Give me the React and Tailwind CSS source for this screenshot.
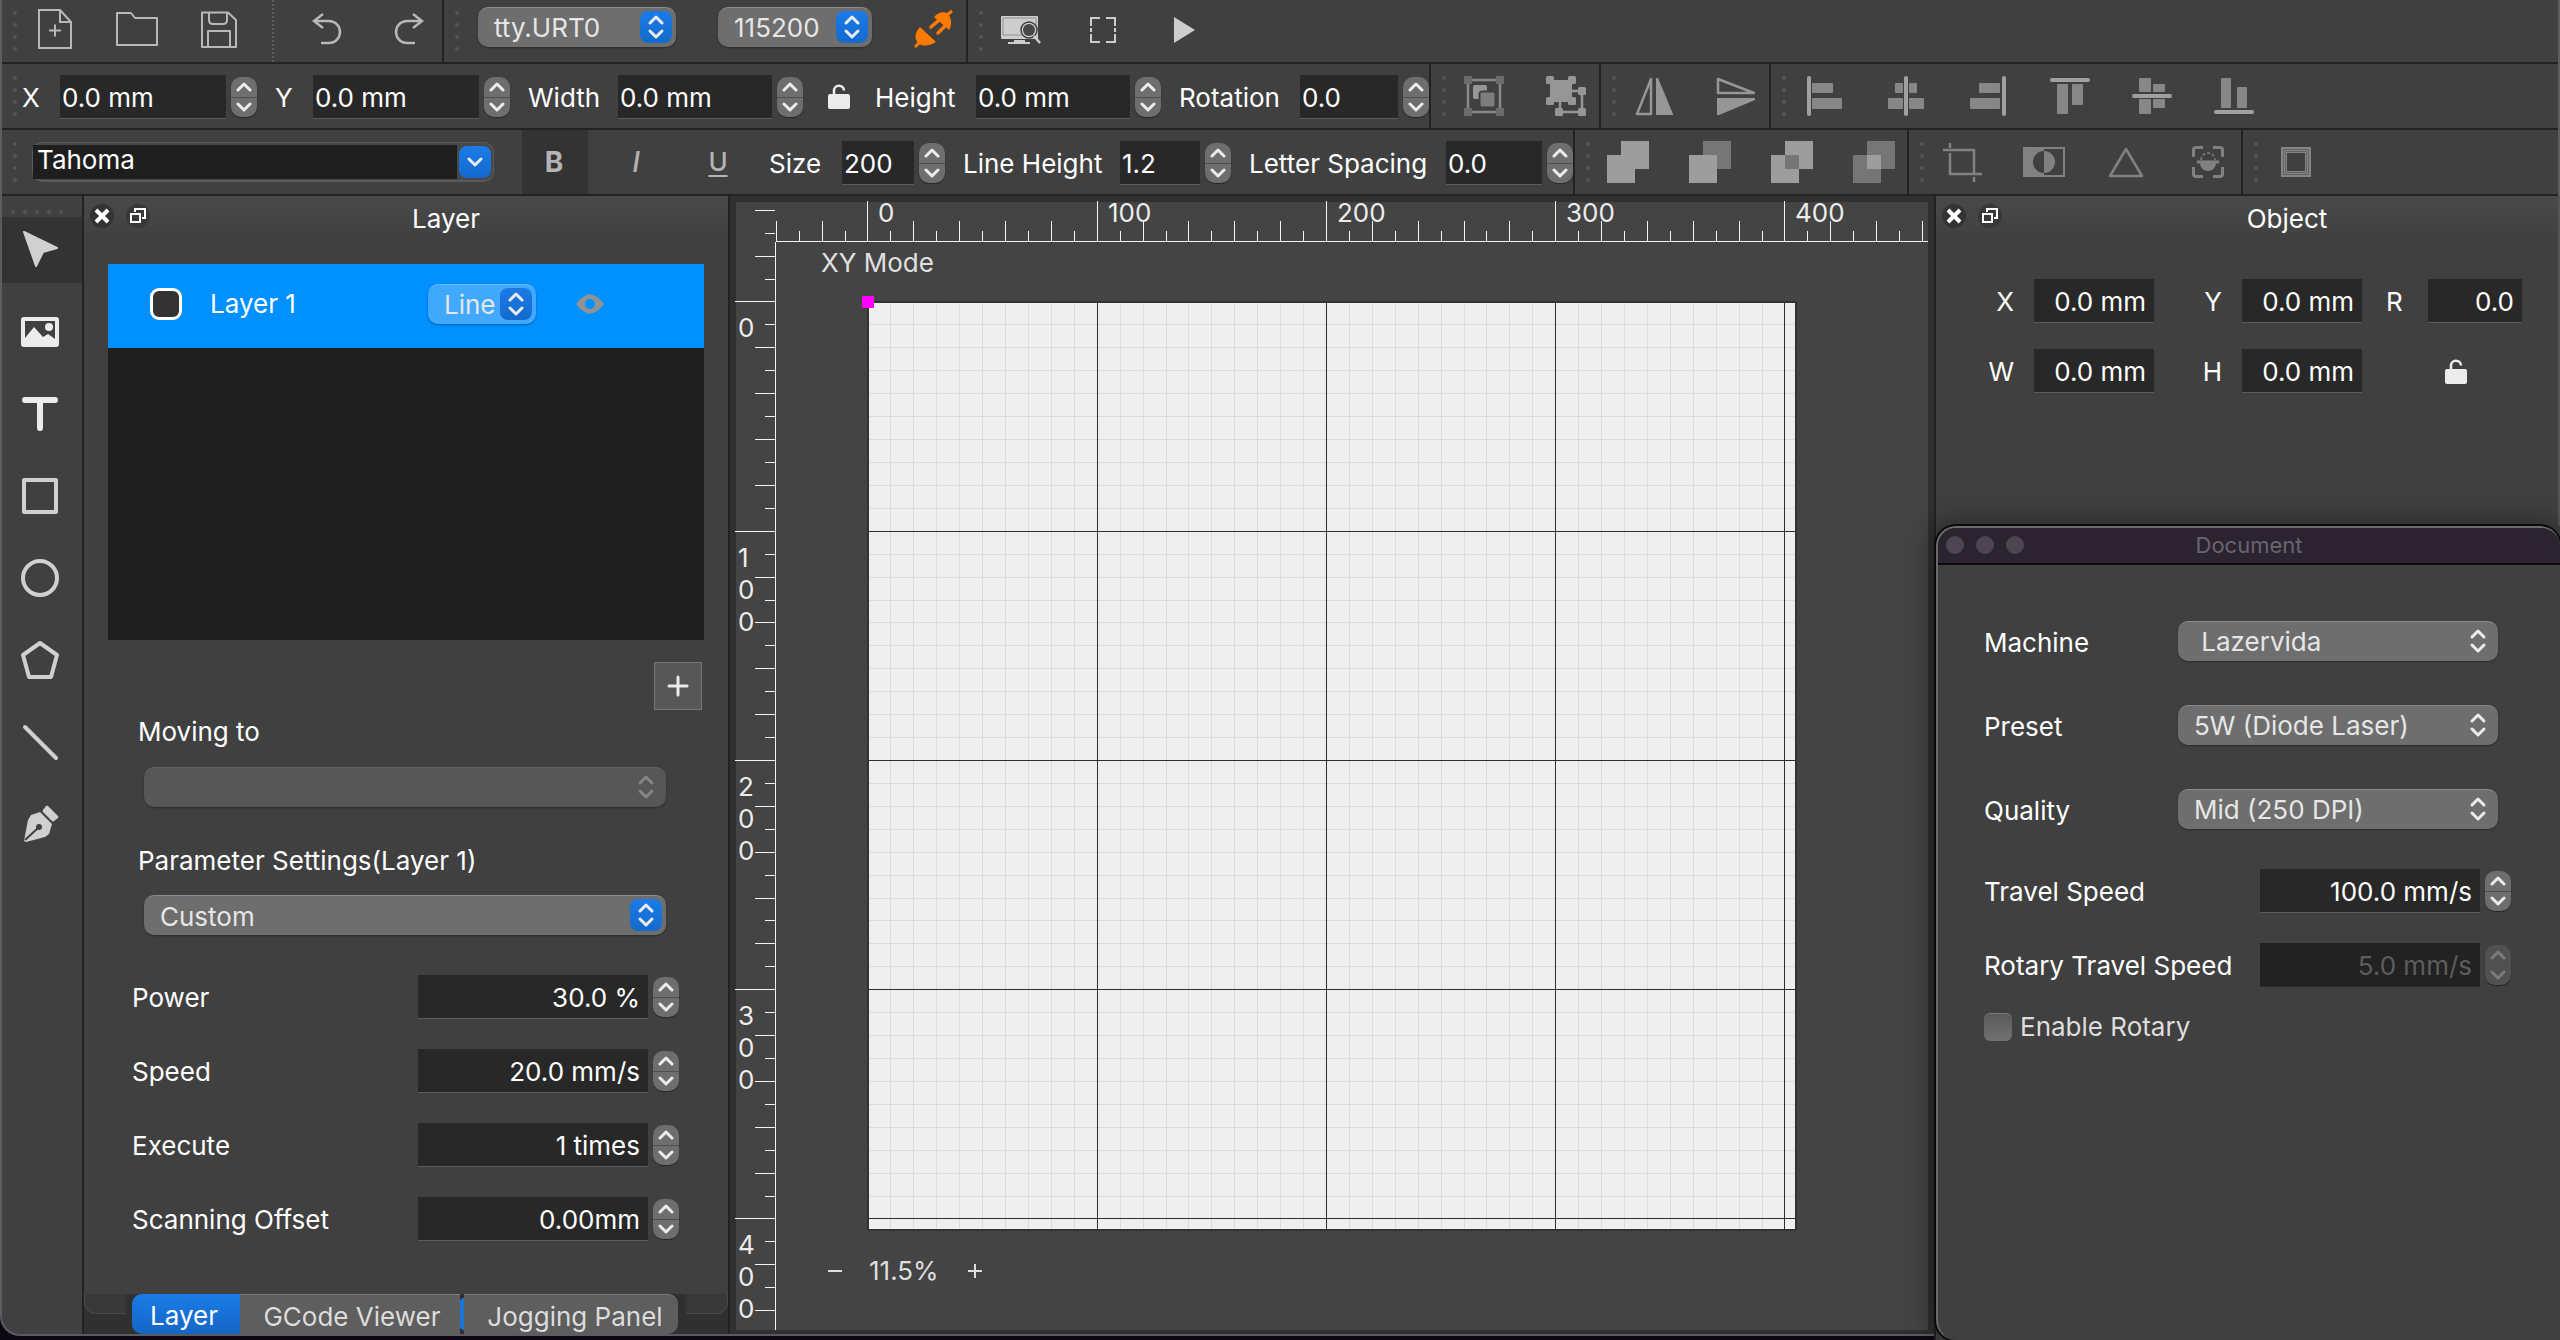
import { useId } from "react";
import clsx from "clsx";

const FONT = "font-['Inter','Liberation_Sans',sans-serif]";

/* ---------- icons ---------- */

function Icon({ children, className }) {
  return (
    <svg
      viewBox="0 0 48 48"
      aria-hidden="true"
      className={clsx("size-12 shrink-0", className)}
      fill="none"
      stroke="currentColor"
      strokeWidth="2"
    >
      {children}
    </svg>
  );
}

const fileIcons = {
  "New file": (
    <>
      <path d="M8 4H29L40 16V42H8Z M29 4V16H40" />
      <path d="M18 24.500H30M24 18.500V30.500" />
    </>
  ),
  "Open file": <path d="M4 39V7H18L22 12H44V39Z" strokeLinejoin="round" />,
  "Save file": (
    <path d="M7 6.500H33L41 14V41H7Z M14 7V14Q14 18 18 18H28Q32 18 32 14V7 M13 41V25H35V41" strokeLinejoin="round" />
  ),
};

const historyIcons = {
  Undo: <path d="M20 8L11 15L20 22M11 15H26A11 11 0 0 1 26 37H18" strokeWidth="2.500" />,
  Redo: <path d="M28 8L37 15L28 22M37 15H22A11 11 0 0 0 22 37H30" strokeWidth="2.500" />,
};

const previewIcons = {
  Preview: (
    <>
      <rect x="4" y="9" width="37" height="23" rx="1" fill="#cdcdcd" stroke="none" />
      <path d="M6 11H39V28H6Z" stroke="#8f8f8f" strokeWidth="1" />
      <path d="M17 33H28V35H33V37H11V35H17Z" fill="#cdcdcd" stroke="none" />
      <circle cx="32" cy="23" r="8" fill="#cdcdcd" stroke="#404040" strokeWidth="1.500" />
      <circle cx="32" cy="23" r="6" fill="#474747" stroke="none" />
      <path d="M37 29L43 36" stroke="#cdcdcd" strokeWidth="2.500" />
    </>
  ),
  Frame: <path d="M21 11H12V19M27 11H36V19M21 35H12V27M27 35H36V27M12 21V25M36 21V25" />,
  Start: <path d="M13 10L34 23L13 36Z" fill="currentColor" stroke="none" />,
};

const groupIcons = {
  Group: (
    <>
      <rect x="8" y="8" width="32" height="32" stroke="#8a8a8a" strokeWidth="2.500" />
      <path
        d="M4 5Q4 4 5 4H12V12H4ZM36 4H43Q44 4 44 5V12H36ZM4 36H12V44H5Q4 44 4 43ZM36 36H44V43Q44 44 43 44H36Z"
        fill="#6c6c6c"
        stroke="none"
      />
      <rect x="13" y="13" width="14" height="14" rx="2" fill="#969696" stroke="none" />
      <rect x="19.500" y="19.500" width="16" height="16" rx="2.500" fill="#7d7d7d" stroke="#404040" />
    </>
  ),
  Ungroup: (
    <>
      <path d="M30 19H40V40H18V30" strokeWidth="2.500" />
      <g fill="currentColor" stroke="none">
        <rect x="8" y="8" width="22" height="22" />
        <rect x="4" y="4" width="8" height="8" rx="1.500" />
        <rect x="26" y="4" width="8" height="8" rx="1.500" />
        <rect x="4" y="25" width="8" height="8" rx="1.500" />
        <rect x="26" y="25" width="8" height="8" rx="1.500" />
        <rect x="36" y="15" width="8" height="8" rx="1.500" />
        <rect x="13" y="36" width="8" height="8" rx="1.500" />
        <rect x="36" y="36" width="8" height="8" rx="1.500" />
      </g>
    </>
  ),
};

const mirrorIcons = {
  "Flip horizontally": (
    <>
      <path d="M21 7V42H7Z" strokeWidth="2.500" strokeLinejoin="round" />
      <path d="M26 6H28L43 42V43H26Z" fill="currentColor" stroke="none" />
    </>
  ),
  "Flip vertically": (
    <>
      <path d="M6 7V21H42Z" strokeWidth="2.500" strokeLinejoin="round" />
      <path d="M5 26H43V28L7 43H5Z" fill="currentColor" stroke="none" />
    </>
  ),
};

// [bar, blocks] of each align icon as x, y, w, h
const alignShapes = {
  "Align left": [[7, 4, 4, 40], [12, 11, 21, 10], [12, 26, 30, 11]],
  "Align center": [[22, 4, 4, 40], [13, 11, 8, 10], [27, 11, 8, 10], [6, 26, 15, 11], [27, 26, 15, 11]],
  "Align right": [[38, 4, 4, 40], [15, 11, 21, 10], [6, 26, 30, 11]],
  "Align top": [[4, 6, 40, 4], [11, 12, 11, 30], [26, 12, 11, 21]],
  "Align middle": [[4, 22, 40, 4], [11, 6, 12, 14], [11, 27, 12, 15], [25, 12, 12, 8], [25, 27, 12, 9]],
  "Align bottom": [[4, 38, 40, 4], [11, 6, 10, 30], [27, 15, 10, 21]],
};

const alignIcons = Object.fromEntries(
  Object.entries(alignShapes).map(([name, [bar, ...blocks]]) => [
    name,
    <g key={name} stroke="none">
      {blocks.map(([x, y, w, h]) => (
        <rect key={`${x}-${y}`} x={x} y={y} width={w} height={h} rx="1" fill="#868886" />
      ))}
      <rect x={bar[0]} y={bar[1]} width={bar[2]} height={bar[3]} rx="2" fill="#a0a0a0" />
    </g>,
  ]),
);

const booleanIcons = {
  Union: <path d="M17 3H45V31H31V45H3V17H17Z" fill="#9d9d9d" stroke="none" />,
  Subtract: (
    <g stroke="none">
      <rect x="17" y="3" width="28" height="28" fill="#767676" />
      <rect x="3" y="17" width="28" height="28" fill="#9d9d9d" />
    </g>
  ),
  Exclude: (
    <g stroke="none">
      <rect x="17" y="3" width="28" height="28" fill="#9d9d9d" />
      <rect x="3" y="17" width="28" height="28" fill="#9d9d9d" />
      <rect x="17" y="17" width="14" height="14" fill="#767676" />
    </g>
  ),
  Intersect: (
    <g stroke="none">
      <rect x="17" y="3" width="28" height="28" fill="#767676" />
      <rect x="3" y="17" width="28" height="28" fill="#767676" />
      <rect x="17" y="17" width="14" height="14" fill="#9d9d9d" />
    </g>
  ),
};

const imageIcons = {
  Crop: <path d="M12 5V10M12 15V36H44M5 12H36V36M36 39V44" strokeWidth="2.500" />,
  Invert: (
    <>
      <rect x="4" y="10" width="40" height="28" />
      <path d="M4 10H24V13A11 11 0 0 0 24 35V38H4Z" fill="currentColor" stroke="none" />
      <path d="M24 13A11 11 0 0 1 24 35Z" fill="currentColor" stroke="none" />
    </>
  ),
  Sharpen: <path d="M24 11L40 38H8Z" strokeWidth="2.500" strokeLinejoin="round" />,
  Trace: (
    <>
      <path d="M19 9.500H12Q9.500 9.500 9.500 12V19M29 9.500H36Q38.500 9.500 38.500 12V19M19 38.500H12Q9.500 38.500 9.500 36V29M29 38.500H36Q38.500 38.500 38.500 36V29" strokeWidth="3" />
      <path d="M17 22A7 7 0 0 1 31 22" strokeDasharray="3 2" strokeWidth="1.500" />
      <path d="M13 22.500H35V25.500H32A8 7.500 0 0 1 16 25.500H13Z" fill="currentColor" stroke="none" />
    </>
  ),
};

const offsetIcons = {
  "Offset path": (
    <>
      <rect x="12" y="12" width="24" height="24" stroke="#858585" strokeWidth="6" />
      <rect x="11.500" y="11.500" width="25" height="25" stroke="#5c5c5c" strokeWidth="0.800" />
      <rect x="13.500" y="13.500" width="21" height="21" stroke="#5c5c5c" strokeWidth="0.800" />
    </>
  ),
};

const tools = [
  {
    name: "Select",
    icon: (
      <path d="M8 6L41 22L27 26L20 40Z" fill="currentColor" strokeLinejoin="round" />
    ),
  },
  {
    name: "Insert image",
    icon: (
      <>
        <rect x="5" y="9" width="38" height="30" rx="3" fill="#ececec" stroke="none" />
        <path d="M9 13H39V31L32 26L27 29L18 19L9 30Z" fill="#404040" stroke="none" />
        <circle cx="33" cy="19" r="4" fill="#ececec" stroke="none" />
      </>
    ),
  },
  { name: "Insert text", icon: <path d="M9 10H39M24 10V38" stroke="#ececec" strokeWidth="6" strokeLinecap="round" /> },
  { name: "Rectangle", icon: <rect x="8" y="8" width="32" height="32" strokeWidth="4" strokeLinejoin="round" /> },
  { name: "Ellipse", icon: <circle cx="24" cy="24" r="17" strokeWidth="4" /> },
  { name: "Polygon", icon: <path d="M24 7L41 19L35 41H13L7 19Z" strokeWidth="4" strokeLinejoin="round" /> },
  { name: "Line", icon: <path d="M9 9L40 40" strokeWidth="4" strokeLinecap="round" /> },
  {
    name: "Pen",
    icon: (
      <g fill="currentColor" stroke="none">
        <path d="M30 6Q31 5 32 6L42 16Q43 17 42 18L38 21Q37 22 36 21L27 12Q26 11 27 10Z" />
        <path d="M24 12L36 24L33 34L29 37L10 42L8 41L12 20L15 15Z" />
        <path d="M9 40L22 28" stroke="#404040" strokeWidth="2" />
        <circle cx="23" cy="27" r="3" fill="#404040" />
      </g>
    ),
  },
];

function PlugIcon() {
  return (
    <Icon className="text-[#ff7a00]">
      <path d="M25 11C29 6 36 5 39 8C43 12 43 20 40 24Z" fill="currentColor" stroke="none" />
      <path d="M11 21C6 26 5 33 9 37C13 41 21 40 27 36Z" fill="currentColor" stroke="none" />
      <path d="M38 9L43 5M10 37L6 41" strokeWidth="3" />
      <path d="M29 15L22 21M36 20L29 27" strokeWidth="3.500" strokeLinecap="round" />
    </Icon>
  );
}

function LockIcon() {
  return (
    <svg viewBox="0 0 24 26" className="h-[26px] w-6" aria-hidden="true">
      <rect x="1" y="10" width="22" height="15" rx="2" fill="#ececec" />
      <path d="M7 11V7A5 5 0 0 1 17 6.500" fill="none" stroke="#ececec" strokeWidth="2.500" />
    </svg>
  );
}

function Chevrons({ className }) {
  return (
    <svg viewBox="0 0 20 28" className={clsx("h-7 w-5", className)} fill="none" stroke="currentColor" strokeWidth="3" strokeLinecap="round" strokeLinejoin="round" aria-hidden="true">
      <path d="M4 10L10 4L16 10M4 18L10 24L16 18" />
    </svg>
  );
}

/* ---------- controls ---------- */

function Select({ label, id, value, accent, disabled, className, selectClassName, tone = "bg-[#6e6e6e]" }) {
  return (
    <div className={clsx("relative h-10", className)}>
      <select
        id={id}
        aria-label={label}
        defaultValue={value}
        disabled={disabled}
        className={clsx(
          "h-full w-full appearance-none rounded-[10px] border-t pr-10 shadow-[0_1px_2px_rgba(0,0,0,0.35)]",
          disabled ? "border-[#626262] bg-[#575757]" : "border-white/20 text-[#e6e6e6]",
          !disabled && tone,
          selectClassName,
        )}
      >
        <option>{value}</option>
      </select>
      <span
        className={clsx(
          "pointer-events-none absolute right-1 top-1 flex h-8 w-8 items-center justify-center rounded-lg",
          accent && "bg-linear-to-b from-[#1b7ce8] to-[#1469cc]",
          disabled ? "text-[#858585]" : "text-[#ececec]",
        )}
      >
        <Chevrons />
      </span>
    </div>
  );
}

function Stepper({ disabled }) {
  return (
    <span
      className={clsx(
        "flex h-10 w-[26px] shrink-0 flex-col overflow-hidden rounded-[10px] shadow-[0_1px_1px_rgba(0,0,0,0.4)]",
        disabled ? "bg-[#515151] text-[#7a7a7a]" : "bg-[#6e6e6e] text-[#ececec]",
      )}
    >
      {["Increase", "Decrease"].map((name, i) => (
        <button
          key={name}
          type="button"
          aria-label={name}
          disabled={disabled}
          className={clsx("flex flex-1 items-center justify-center", i === 0 && "border-b border-[#4f4f4f]")}
        >
          <svg viewBox="0 0 16 10" className="h-2.5 w-4" fill="none" stroke="currentColor" strokeWidth="3" strokeLinecap="round" strokeLinejoin="round">
            <path d={i === 0 ? "M2 8L8 2L14 8" : "M2 2L8 8L14 2"} />
          </svg>
        </button>
      ))}
    </span>
  );
}

function Field({ label, value, labelClassName, inputClassName, className, stepper = true, right, disabled }) {
  const id = useId();
  return (
    <div className={clsx("flex items-center", className)}>
      <label htmlFor={id} className={clsx("shrink-0 whitespace-nowrap pt-0.5", labelClassName)}>
        {label}
      </label>
      <input
        id={id}
        type="text"
        defaultValue={value}
        disabled={disabled}
        className={clsx(
          "h-11 shrink-0 border-b pt-0.5",
          right ? "pr-2 text-right" : "pl-0.5",
          disabled ? "border-[#2a2a2a] bg-[#222222] text-[#5d5d5d]" : "border-[#5c5c5c] bg-[#282828]",
          inputClassName,
        )}
      />
      {stepper && (
        <span className="ml-[5px] flex">
          <Stepper disabled={disabled} />
        </span>
      )}
    </div>
  );
}

function Grip() {
  return (
    <span className="flex w-5 shrink-0 flex-col gap-2 pl-[11px]">
      {[0, 1, 2, 3].map((i) => (
        <span key={i} className="size-1 rounded-full bg-[#555555]" />
      ))}
    </span>
  );
}

function Section({ children, last }) {
  return (
    <div className={clsx("flex h-full items-center", !last && "border-r-2 border-[#222222]")}>
      <Grip />
      {children}
    </div>
  );
}

function ToolButtons({ icons, className }) {
  return (
    <div className={clsx("flex h-full gap-4", className)}>
      {Object.entries(icons).map(([name, icon]) => (
        <button key={name} type="button" aria-label={name} className="flex w-[66px] items-center justify-center">
          <Icon>{icon}</Icon>
        </button>
      ))}
    </div>
  );
}

/* ---------- toolbars ---------- */

function Toolbar({ children }) {
  return <div className="box-content flex h-16 border-b-2 border-[#222222]">{children}</div>;
}

function Toolbars() {
  return (
    <header className="shrink-0 border-x-2 border-[#5c5c5c] bg-[#404040]">
      <div className="flex h-16 border-b-2 border-[#222222]">
        <Section>
          <ToolButtons icons={fileIcons} className="pb-0.5 text-[#b8b8b8]" />
          <span className="mx-4 flex h-full w-2.5 justify-center">
            <span className="h-full border-l-2 border-dotted border-[#5a5a5a]" />
          </span>
          <ToolButtons icons={historyIcons} className="pb-0.5 text-[#b8b8b8]" />
        </Section>
        <Section>
          <div className="ml-3.5 flex gap-[42px] pb-2">
            <Select label="Port" value="tty.URT0" accent className="w-[198px]" selectClassName="pl-4" />
            <Select label="Baud rate" value="115200" accent className="w-[154px]" selectClassName="pl-4" />
          </div>
          <button type="button" aria-label="Disconnect" className="ml-7 flex h-full w-[66px] items-center justify-center pb-0.5">
            <PlugIcon />
          </button>
        </Section>
        <Section last>
          <ToolButtons icons={previewIcons} className="text-[#cdcdcd]" />
        </Section>
      </div>

      <Toolbar>
        <Section>
          <div className="flex items-center pt-0.5">
            <Field label="X" value="0.0 mm" labelClassName="w-[38px]" inputClassName="w-[166px]" />
            <Field label="Y" value="0.0 mm" className="ml-[18px]" labelClassName="w-[38px]" inputClassName="w-[166px]" />
            <Field label="Width" value="0.0 mm" className="ml-[18px]" labelClassName="w-[90px]" inputClassName="w-[154px]" />
            <button type="button" aria-label="Lock ratio" className="mx-6">
              <LockIcon />
            </button>
            <Field label="Height" value="0.0 mm" labelClassName="w-[101px]" inputClassName="w-[154px]" />
            <Field label="Rotation" value="0.0" className="ml-[18px]" labelClassName="w-[121px]" inputClassName="w-[98px]" />
          </div>
        </Section>
        <Section>
          <ToolButtons icons={groupIcons} className="text-[#969696]" />
        </Section>
        <Section>
          <ToolButtons icons={mirrorIcons} className="text-[#969696]" />
        </Section>
        <Section last>
          <ToolButtons icons={alignIcons} />
        </Section>
      </Toolbar>

      <Toolbar>
        <Section>
          <div className="ml-2.5 flex h-10 w-[462px] items-center rounded-[10px] border border-b-2 border-[#5a5a5a] bg-[#484848] pr-0.5">
            <input
              aria-label="Font family"
              type="text"
              defaultValue="Tahoma"
              className="h-[34px] min-w-0 flex-1 bg-[#1e1e1e] pb-1 pl-1"
            />
            <button
              type="button"
              aria-label="Show fonts"
              className="ml-0.5 flex size-8 items-center justify-center rounded-lg bg-linear-to-b from-[#1b7ce8] to-[#1469cc]"
            >
              <svg viewBox="0 0 16 10" className="h-2.5 w-4" fill="none" stroke="#ececec" strokeWidth="3" strokeLinecap="round" strokeLinejoin="round">
                <path d="M2 2L8 8L14 2" />
              </svg>
            </button>
          </div>
          <div className="ml-7 flex h-full gap-4 text-[28px] text-[#b4b4b4]">
            <button type="button" aria-pressed="true" className="w-[66px] bg-[#333333] pr-0.5 font-bold">B</button>
            <button type="button" className="w-[66px] pr-0.5 font-medium italic">I</button>
            <button type="button" className="w-[66px] pr-0.5 text-[26px] font-medium underline underline-offset-4">U</button>
          </div>
          <div className="ml-[17px] flex gap-[18px] pt-0.5">
            <Field label="Size" value="200" labelClassName="w-[73px]" inputClassName="w-[72px]" />
            <Field label="Line Height" value="1.2" labelClassName="w-[157px]" inputClassName="w-20" />
            <Field label="Letter Spacing" value="0.0" labelClassName="w-[197px]" inputClassName="w-24" />
          </div>
        </Section>
        <Section>
          <ToolButtons icons={booleanIcons} />
        </Section>
        <Section>
          <ToolButtons icons={imageIcons} className="text-[#818181]" />
        </Section>
        <Section last>
          <ToolButtons icons={offsetIcons} className="text-[#818181]" />
        </Section>
      </Toolbar>
    </header>
  );
}

/* ---------- left side ---------- */

function ToolRail() {
  return (
    <nav className="flex w-[82px] shrink-0 flex-col border-r-2 border-[#222222]">
      <div className="flex h-[21px] items-center gap-2 pl-[9px] pt-2.5">
        {[0, 1, 2, 3, 4].map((i) => (
          <span key={i} className="size-1 rounded-full bg-[#555555]" />
        ))}
      </div>
      <div className="flex flex-col gap-4 text-[#d0d0d0]">
        {tools.map((tool, i) => (
          <button
            key={tool.name}
            type="button"
            aria-label={tool.name}
            className={clsx("flex h-[66px] items-center justify-center pr-1", i === 0 && "bg-[#333333]")}
          >
            <Icon>{tool.icon}</Icon>
          </button>
        ))}
      </div>
    </nav>
  );
}

function DockHeader({ title }) {
  return (
    <div className="flex h-[46px] shrink-0 items-center bg-linear-to-b from-[#494949] to-[#404040]">
      <div className="flex w-20 gap-3 pb-1.5 pl-1.5">
        <button type="button" aria-label={`Close ${title}`} className="flex size-6 items-center justify-center rounded-full bg-[#333333]">
          <svg viewBox="0 0 16 16" className="size-4" stroke="#ffffff" strokeWidth="4">
            <path d="M2 2L14 14M14 2L2 14" />
          </svg>
        </button>
        <button type="button" aria-label={`Float ${title}`} className="flex size-6 items-center justify-center rounded-full bg-[#383838]">
          <svg viewBox="0 0 18 16" className="h-4 w-[18px]" fill="none" stroke="#ffffff" strokeWidth="2">
            <path d="M6 4V1H16V10H13M2 6H11V14H2Z" />
          </svg>
        </button>
      </div>
      <h2 className="flex-1 text-center">{title}</h2>
    </div>
  );
}

const layerParams = [
  ["Power", "30.0 %"],
  ["Speed", "20.0 mm/s"],
  ["Execute", "1 times"],
  ["Scanning Offset", "0.00mm"],
];

function LayerPanel() {
  return (
    <section className="flex w-[646px] shrink-0 flex-col border-r-2 border-[#222222]">
      <DockHeader title="Layer" />
      <div className="mx-6 mt-[22px] h-[376px] bg-[#1e1e1e]">
        <div className="flex h-[84px] items-center bg-[#0090ff] pb-1 pl-[42px]">
          <button type="button" aria-label="Layer color" className="size-8 rounded-[9px] border-3 border-white bg-[#333333]" />
          <span className="w-[246px] pl-7">Layer 1</span>
          <Select label="Layer type" value="Line" accent tone="bg-[#41a9fd]" className="w-[108px]" selectClassName="pl-4" />
          <button type="button" aria-label="Hide layer" className="ml-10">
            <svg viewBox="0 0 28 20" className="h-5 w-7">
              <path d="M0 10Q14 -9 28 10Q14 29 0 10Z" fill="#929292" />
              <circle cx="14" cy="10" r="5" fill="#0090ff" />
            </svg>
          </button>
        </div>
      </div>
      <button
        type="button"
        aria-label="Add layer"
        className="mr-[26px] mt-[22px] flex size-12 items-center justify-center self-end border border-[#757575] bg-[#575757]"
      >
        <svg viewBox="0 0 22 22" className="size-[22px]" stroke="#ececec" strokeWidth="3" strokeLinecap="round">
          <path d="M2 11H20M11 2V20" />
        </svg>
      </button>
      <label htmlFor="moving-to" className="ml-[54px] mt-1.5">Moving to</label>
      <Select id="moving-to" label="Moving to" value="" disabled className="ml-[60px] mr-[62px] mt-[19px]" />
      <label htmlFor="param-preset" className="ml-[54px] mt-[38px]">Parameter Settings(Layer 1)</label>
      <Select id="param-preset" value="Custom" accent className="ml-[60px] mr-[62px] mt-[18px]" selectClassName="pl-4 pt-0.5" />
      <div className="ml-12 mt-10 flex flex-col gap-[30px]">
        {layerParams.map(([label, value]) => (
          <Field key={label} label={label} value={value} right labelClassName="w-[286px]" inputClassName="w-[230px]" />
        ))}
      </div>

      <div className="mt-auto flex h-10 bg-[#303030]">
        <span className="h-5 flex-1 rounded-bl-xl border-b border-l border-[#4a4a4a] bg-[#383838]" />
        <div role="tablist" className="ml-1.5 mr-2 flex w-[546px] text-[#dcdcdc]">
          <button type="button" role="tab" aria-selected="true" className="w-[108px] rounded-l-[10px] bg-linear-to-b from-[#1b7ce8] to-[#1466c4] pr-1 pt-1 text-white">
            Layer
          </button>
          <button type="button" role="tab" aria-selected="false" className="w-[220px] border-t border-[#7a7a7a] bg-[#5e5e5e] pl-1 pt-1">
            GCode Viewer
          </button>
          <span className="my-1 w-1 rounded-l-full bg-[#1b74d8]" />
          <button type="button" role="tab" aria-selected="false" className="flex-1 rounded-r-[10px] border-t border-[#7a7a7a] bg-[#5e5e5e] pl-2 pt-1">
            Jogging Panel
          </button>
        </div>
        <span className="h-5 flex-1 rounded-br-xl border-b border-r border-[#4a4a4a] bg-[#383838]" />
      </div>
    </section>
  );
}

/* ---------- canvas ---------- */

const RULER = 40;
const ORIGIN = { x: 131, y: 99 };
const UNIT = 2.2925; // px per mm
const BED = 405;

const mm = (v) => Math.ceil(v * UNIT);
const range = (from, to, step) => Array.from({ length: Math.floor((to - from) / step) + 1 }, (_, i) => from + i * step);

function tickLength(v) {
  if (v >= 0 && v % 100 === 0) return 40;
  return v % 20 === 0 ? 20 : 10;
}

function Workspace() {
  const lines = range(10, 400, 10);
  const size = mm(BED);
  return (
    <main className="relative min-w-0 flex-1 border-b-4 border-l-6 border-r-6 border-t-6 border-[#303030] bg-[#444444]">
      <svg className="absolute inset-0 h-full w-full overflow-visible" shapeRendering="crispEdges">
        <g stroke="#f4f4f4">
          <line x1={RULER} y1="39.5" x2="100%" y2="39.5" />
          <line x1="39.5" y1={RULER} x2="39.5" y2="100%" />
          {range(-40, 460, 10).map((v) => (
            <path key={v} d={`M${ORIGIN.x + mm(v) + 0.5} 39V${39 - tickLength(v)}`} />
          ))}
          {range(-40, 440, 10).map((v) => (
            <path key={v} d={`M39 ${ORIGIN.y + mm(v) + 0.5}H${39 - tickLength(v)}`} />
          ))}
        </g>
        <g fill="#ececec" fontSize="26">
          {range(0, 400, 100).map((v) => (
            <text key={v} x={ORIGIN.x + mm(v) + 11} y="20">{v}</text>
          ))}
          {range(0, 400, 100).map((v) =>
            String(v).split("").map((digit, i) => (
              <text key={`${v}-${i}`} x="2" y={ORIGIN.y + mm(v) + 36 + i * 32}>{digit}</text>
            )),
          )}
        </g>

        <g transform={`translate(${ORIGIN.x} ${ORIGIN.y})`}>
          <rect x="1" y="1" width={size - 1} height={size - 1} fill="#efefef" stroke="#333333" strokeWidth="2" />
          {lines.filter((v) => v % 100).map((v) => (
            <path key={v} stroke="#dcdcdc" d={`M${mm(v) + 0.5} 2V${size - 1}M2 ${mm(v) + 0.5}H${size - 1}`} />
          ))}
          {lines.filter((v) => v % 100 === 0).map((v) => (
            <path key={v} stroke="#2e2e2e" d={`M${mm(v) + 0.5} 2V${size - 1}M2 ${mm(v) + 0.5}H${size - 1}`} />
          ))}
          <rect x="-5" y="-5" width="12" height="12" fill="#ff00ff" />
        </g>
      </svg>

      <span className="absolute left-[85px] top-[45px] text-[#e0e0e0]">XY Mode</span>
      <div className="absolute bottom-[43px] left-[85px] flex items-center text-[#dedede]">
        <button type="button" aria-label="Zoom out" className="flex w-12 pl-1.5">
          <svg viewBox="0 0 16 16" className="size-4" stroke="currentColor" strokeWidth="2">
            <path d="M1 8H15" />
          </svg>
        </button>
        <span className="w-[98px]">11.5%</span>
        <button type="button" aria-label="Zoom in">
          <svg viewBox="0 0 16 16" className="size-4" stroke="currentColor" strokeWidth="2">
            <path d="M1 8H15M8 1V15" />
          </svg>
        </button>
      </div>
    </main>
  );
}

/* ---------- right side ---------- */

function ObjectPanel() {
  const label = "pr-5 text-right";
  return (
    <section className="h-[330px] border-r-2 border-[#555555] bg-[#404040]">
      <DockHeader title="Object" />
      <div className="flex flex-col gap-[26px] pt-[37px]">
        <div className="flex">
          <Field label="X" value="0.0 mm" right stepper={false} labelClassName={clsx(label, "w-[98px]")} inputClassName="w-[120px]" />
          <Field label="Y" value="0.0 mm" right stepper={false} labelClassName={clsx(label, "w-[88px]")} inputClassName="w-[120px]" />
          <Field label="R" value="0.0" right stepper={false} labelClassName="w-[66px] pl-6" inputClassName="w-[94px]" />
        </div>
        <div className="flex">
          <Field label="W" value="0.0 mm" right stepper={false} labelClassName={clsx(label, "w-[98px]")} inputClassName="w-[120px]" />
          <Field label="H" value="0.0 mm" right stepper={false} labelClassName={clsx(label, "w-[88px]")} inputClassName="w-[120px]" />
          <button type="button" aria-label="Lock ratio" className="ml-[82px] pt-0.5">
            <LockIcon />
          </button>
        </div>
      </div>
    </section>
  );
}

const documentSelects = [
  ["Machine", "\u00a0Lazervida"],
  ["Preset", "5W (Diode Laser)"],
  ["Quality", "Mid (250 DPI)"],
];

function DocumentWindow() {
  return (
    <section className="relative flex flex-1 flex-col overflow-hidden rounded-t-[20px] rounded-bl-[20px] border-l-2 border-t-2 border-[#6a6a6a] bg-[#404040] shadow-[0_0_0_2px_#0a0a0a,0_0_24px_6px_rgba(0,0,0,0.35)]">
      <div className="flex h-[37px] shrink-0 items-center border-b-2 border-[#0a0a0a] bg-[#2b2430] pb-0.5">
        <div className="flex w-20 gap-3 pl-2">
          {["Close", "Minimize", "Zoom"].map((name) => (
            <button key={name} type="button" aria-label={name} className="size-[18px] shrink-0 rounded-full bg-[#4d4652]" />
          ))}
        </div>
        <h2 className="flex-1 pr-20 text-center text-[22px] text-[#6a6370]">Document</h2>
      </div>
      <div className="ml-[46px] mt-14 flex flex-col gap-11">
        {documentSelects.map(([label, value]) => (
          <div key={label} className="flex h-10 items-center">
            <label htmlFor={label} className="w-[194px] pt-[3px]">{label}</label>
            <Select id={label} value={value} className="w-80" selectClassName="pl-4" />
          </div>
        ))}
      </div>
      <div className="ml-[46px] mt-10 flex flex-col gap-[30px]">
        <Field label="Travel Speed" value="100.0 mm/s" right labelClassName="w-[276px]" inputClassName="w-[220px]" />
        <Field label="Rotary Travel Speed" value="5.0 mm/s" right disabled labelClassName="w-[276px]" inputClassName="w-[220px]" />
      </div>
      <label className="ml-[46px] mt-6 flex items-center gap-2 text-[#dedede]">
        <input type="checkbox" className="size-7 appearance-none rounded-md border-t border-[#7c7c7c] bg-linear-to-b from-[#5a5a5a] to-[#727272]" />
        Enable Rotary
      </label>
    </section>
  );
}

export default function App() {
  return (
    <div className={clsx(FONT, "flex h-screen min-w-fit flex-col overflow-hidden bg-[#0c0712] text-[26px] leading-8 text-white")}>
      <Toolbars />
      <div className="flex min-h-0 flex-1">
        <div className="mb-1 flex min-w-0 flex-1 overflow-hidden rounded-bl-[20px] border-b-2 border-l-2 border-[#5c5c5c] bg-[#404040]">
          <ToolRail />
          <LayerPanel />
          <Workspace />
        </div>
        <aside className="flex w-[626px] shrink-0 flex-col border-l-2 border-[#222222] bg-[#404040]">
          <ObjectPanel />
          <DocumentWindow />
        </aside>
      </div>
    </div>
  );
}
